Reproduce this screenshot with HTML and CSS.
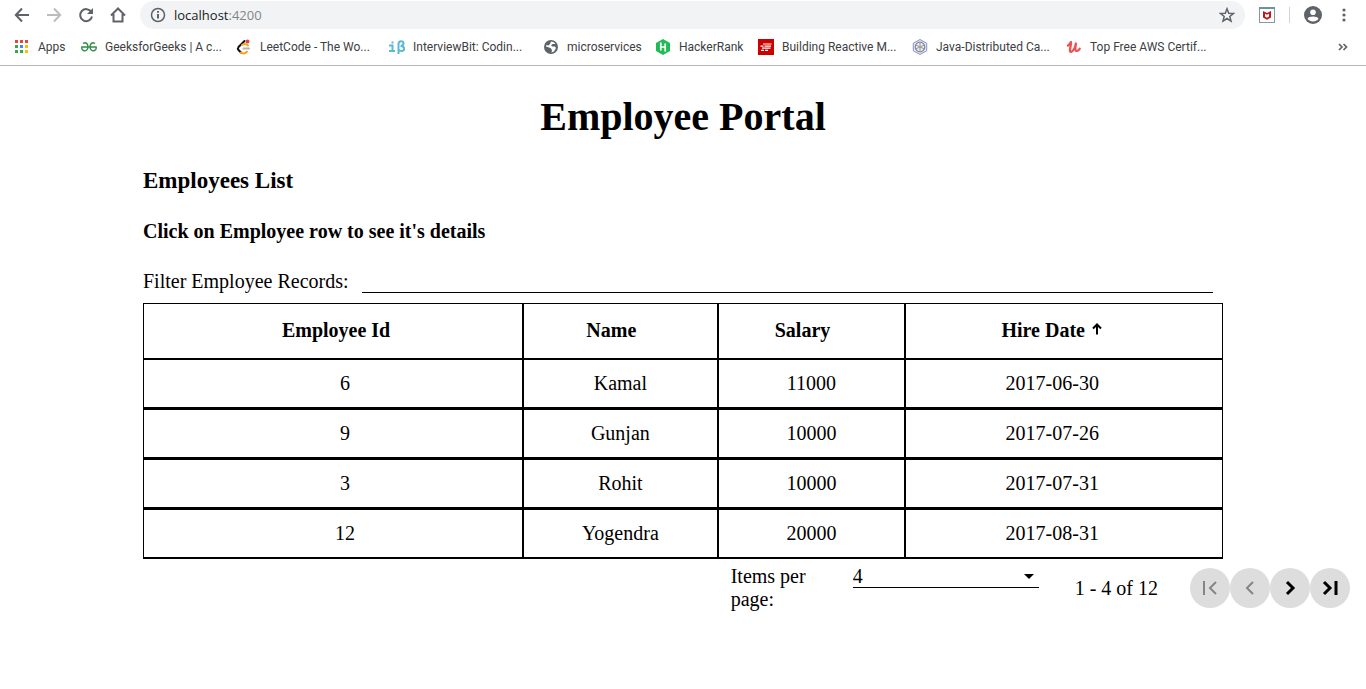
FILE: index.html
```html
<!DOCTYPE html>
<html lang="en">
<head>
<meta charset="utf-8">
<title>Employee Portal</title>
<link rel="stylesheet" href="styles.css">
</head>
<body>
<header class="browser">
  <div class="toolbar">
    <nav class="nav-buttons" aria-label="Navigation">
      <button class="icon-button" aria-label="Back"><svg class="icon" viewBox="0 0 16 16"><path d="M15 8H2M8 1.500L1.800 8L8 14.500" /></svg></button>
      <button class="icon-button is-muted" aria-label="Forward"><svg class="icon" viewBox="0 0 16 16"><path d="M1 8h13M8 1.500L14.200 8L8 14.500" /></svg></button>
      <button class="icon-button" aria-label="Reload"><svg class="icon" viewBox="0 0 16 16"><path d="M13.300 5A6 6 0 1 0 14 9.500" /><path class="solid" d="M15 1v6H9z" /></svg></button>
      <button class="icon-button" aria-label="Home"><svg class="icon" viewBox="0 0 16 16"><path d="M1 8.500L8 1.500l7 7M3.500 7v7.500h9V7" /></svg></button>
    </nav>
    <div class="address">
      <svg class="icon thin" viewBox="0 0 16 16"><circle cx="8" cy="8" r="6.500" /><path d="M8 7v4.500M8 4v1.800" stroke-width="2" /></svg>
      <span class="url">localhost<span class="port">:4200</span></span>
      <button class="icon-button" aria-label="Bookmark this page"><svg class="icon thin" viewBox="0 0 16 16"><path d="M8 1.800l1.700 4.400 4.700.3-3.600 3 1.200 4.600L8 11.500l-4 2.600 1.200-4.600-3.600-3 4.700-.3z" /></svg></button>
    </div>
    <div class="extensions">
      <button class="icon-button" aria-label="Security extension"><svg class="glyph" viewBox="0 0 16 16"><path fill="#8b979f" d="M0 0h16v16H0z"/><path fill="#6893a5" d="M0 0h16v2H0z"/><path fill="#fff" d="M1 2h14v13H1z"/><path fill="#c01818" d="M4 4l4 2 4-2v6.500L8 12.800 4 10.500z"/><path fill="#fff" d="M6 6.700l2 1 2-1v2.800l-2 1.200-2-1.200z"/></svg></button>
      <span class="divider"></span>
      <button class="icon-button" aria-label="Profile"><svg class="glyph profile" viewBox="0 0 18 18"><circle cx="9" cy="9" r="9" fill="#5f6368"/><circle cx="9" cy="6.200" r="2.800" fill="#fff"/><path fill="#fff" d="M3.500 12.800C4.500 9.800 13.500 9.800 14.500 12.800 12 16.500 6 16.500 3.500 12.800z"/></svg></button>
      <button class="icon-button" aria-label="Menu"><svg class="glyph" viewBox="0 0 16 16" fill="#5f6368"><circle cx="8" cy="3" r="1.600"/><circle cx="8" cy="8" r="1.600"/><circle cx="8" cy="13" r="1.600"/></svg></button>
    </div>
  </div>
  <nav class="bookmarks" aria-label="Bookmarks">
    <a class="bookmark" href="#"><svg class="glyph" viewBox="0 0 16 16"><path fill="#ea4335" d="M1 1h3v3H1zM6 1h3v3H6zM11 1h3v3h-3z"/><path fill="#34a853" d="M1 6h3v3H1zM1 11h3v3H1zM6 11h3v3H6z"/><path fill="#4285f4" d="M6 6h3v3H6z"/><path fill="#fbbc05" d="M11 6h3v3h-3zM11 11h3v3h-3z"/></svg>Apps</a>
    <a class="bookmark" href="#"><svg class="glyph" viewBox="0 0 16 16" fill="none" stroke="#2f8d46" stroke-width="1.400"><path d="M2 4.500C5 2.500 7 5 7 8s-2.500 4.500-4.500 3.500C.8 10.800.7 9 .9 8H15.100c.2 1 .1 2.800-1.600 3.500C11.500 12.500 9 11 9 8s2-5.500 5-3.500"/></svg>GeeksforGeeks | A c...</a>
    <a class="bookmark" href="#"><svg class="glyph" viewBox="0 0 16 16" fill="none" stroke-width="2" stroke-linecap="round"><path stroke="#111" d="M8.500 2L2.500 8c-.8 1-.8 2 0 3l2.500 2.500"/><path stroke="#ffa116" d="M5 13.500c2 1.500 4 1.500 6-.8M6 6c2-1.500 4-1.500 6 .5"/><path stroke="#b3b3b3" d="M7.500 9.500H13"/><circle cx="11.500" cy="2.500" r="2" fill="#df4444"/></svg>LeetCode - The Wo...</a>
    <a class="bookmark" href="#"><svg class="glyph" viewBox="0 0 16 16" fill="none" stroke="#5bbad0" stroke-width="2"><path d="M0 6.500h3.500V12M0 12h6M3.500 2.500v2M9.500 15V5c0-4 5.500-3.500 5-.5-.3 2-2 2.500-3 2.500 4.500 0 5 5 1 5-1.500 0-3-1-3-2"/></svg>InterviewBit: Codin...</a>
    <a class="bookmark" href="#"><svg class="glyph" viewBox="0 0 16 16"><circle cx="8" cy="8" r="7" fill="#5f6368"/><path fill="#fff" d="M8 2.500c2 0 3.500 1 4.500 2.500H9.500L8 6.500l1.500 1H12l1 1.500-2 3.500-2.500 1 .5-2.500L7.500 9 3 7.500 3.500 6l2 .5L7 5z"/></svg>microservices</a>
    <a class="bookmark" href="#"><svg class="glyph" viewBox="0 0 16 16"><path fill="#1ebc54" d="M8 0l7 4v8l-7 4-7-4V4z"/><path fill="none" stroke="#fff" stroke-width="1.700" d="M5.800 3.500v8M10.200 4.500v8M5.800 8h4.400"/></svg>HackerRank</a>
    <a class="bookmark" href="#"><svg class="glyph" viewBox="0 0 16 16"><path fill="#c00" d="M0 0h16v16H0z"/><path stroke="#fff" stroke-width="1.200" d="M5 5h8.500M2.500 7.100h3M6.500 7.100h6.500M4 9.200h8.500M3 11.300h3M7 11.300h3"/></svg>Building Reactive M...</a>
    <a class="bookmark" href="#"><svg class="glyph" viewBox="0 0 16 16" fill="none"><path fill="#e8ebf5" stroke="#8492c8" d="M8 .5l6.700 3.700v7.600L8 15.500l-6.700-3.700V4.200z"/><circle cx="8" cy="8" r="4.800" stroke="#888" stroke-width="1.200"/><path stroke="#999" d="M8 3v10M3.500 6l9 4M3.500 10l9-4"/></svg>Java-Distributed Ca...</a>
    <a class="bookmark" href="#"><svg class="glyph" viewBox="0 0 16 16" fill="none" stroke="#ec5252" stroke-width="2.300" stroke-linecap="round" stroke-linejoin="round"><path d="M2 6.500c1.500-1 2.500-3 3-3.500.5 3-2 8-.8 9.500C6.500 14 9 9 10 4.500c-.5 3-1.300 6.500 0 7.300 1.200.5 3-1 3.700-2"/></svg>Top Free AWS Certif...</a>
    <button class="icon-button more" aria-label="More bookmarks"><svg class="glyph" viewBox="0 0 16 16" fill="none" stroke="#5f6368" stroke-width="1.700"><path d="M4 5l3 3-3 3M8.500 5l3 3-3 3"/></svg></button>
  </nav>
</header>
<main class="page">
  <h1 class="title">Employee Portal</h1>
  <section class="content">
    <h2 class="heading">Employees List</h2>
    <h3 class="hint">Click on Employee row to see it's details</h3>
    <div class="filter">
      <label for="filter">Filter Employee Records:</label>
      <input class="filter-input" id="filter" type="text">
    </div>
    <table class="employees">
      <colgroup><col class="col-id"><col class="col-name"><col class="col-salary"><col class="col-date"></colgroup>
      <thead>
        <tr>
          <th><button class="sort">Employee Id<span class="arrow"></span></button></th>
          <th><button class="sort">Name<span class="arrow"></span></button></th>
          <th><button class="sort">Salary<span class="arrow"></span></button></th>
          <th aria-sort="ascending"><button class="sort">Hire Date<span class="arrow"><svg viewBox="0 0 12 12"><path d="M6 11.500V2M2 5.500l4-4 4 4"/></svg></span></button></th>
        </tr>
      </thead>
      <tbody>
        <tr><td>6</td><td>Kamal</td><td>11000</td><td>2017-06-30</td></tr>
        <tr><td>9</td><td>Gunjan</td><td>10000</td><td>2017-07-26</td></tr>
        <tr><td>3</td><td>Rohit</td><td>10000</td><td>2017-07-31</td></tr>
        <tr><td>12</td><td>Yogendra</td><td>20000</td><td>2017-08-31</td></tr>
      </tbody>
    </table>
  </section>
  <div class="paginator">
    <label class="size-label" for="size">Items per page:</label>
    <div class="size-field">
      <select class="size" id="size"><option>4</option><option>8</option><option>12</option></select>
      <svg class="caret" viewBox="0 0 10 5"><path d="M0 0h10L5 5z"/></svg>
    </div>
    <span class="range">1 - 4 of 12</span>
    <div class="pager">
      <button class="page-button" disabled aria-label="First page"><svg viewBox="0 0 24 24"><path d="M6 5v14M18 6l-6 6 6 6"/></svg></button>
      <button class="page-button" disabled aria-label="Previous page"><svg viewBox="0 0 24 24"><path d="M15 6l-6 6 6 6"/></svg></button>
      <button class="page-button" aria-label="Next page"><svg viewBox="0 0 24 24"><path d="M9 6l6 6-6 6"/></svg></button>
      <button class="page-button" aria-label="Last page"><svg viewBox="0 0 24 24"><path d="M6 6l6 6-6 6M18 5v14"/></svg></button>
    </div>
  </div>
</main>
</body>
</html>
```
FILE: styles.css
```css
* { box-sizing: border-box; }
body {
  margin: 0;
  background: #fff;
  color: #000;
  font: 20px/23px "Liberation Serif", serif;
}
button, input, select {
  font: inherit;
  color: inherit;
  border: 0;
  background: none;
  padding: 0;
  border-radius: 0;
}
svg { display: block; flex: none; }

.browser {
  border-bottom: 1px solid #b6b6b6;
  color: #3c4043;
  font: 12px/16px Roboto, sans-serif;
}
.toolbar {
  display: flex;
  align-items: center;
  height: 30px;
  padding: 0 14px;
}
.nav-buttons { display: flex; gap: 16px; }
.icon-button { display: flex; align-items: center; }
.icon, .glyph { width: 16px; height: 16px; }
.icon {
  fill: none;
  stroke: #5f6368;
  stroke-width: 2;
}
.icon .solid { fill: #5f6368; stroke: none; }
.thin { stroke-width: 1.5; }
.is-muted .icon { stroke: #babcbe; }
.profile { width: 18px; height: 18px; }
.address {
  display: flex;
  align-items: center;
  flex: 1;
  height: 28px;
  margin-left: 14px;
  padding: 0 10px;
  gap: 8px;
  border-radius: 14px;
  background: #f1f3f4;
}
.url {
  flex: 1;
  color: #202124;
  font-family: "Open Sans", sans-serif;
  font-size: 13px;
}
.port { color: #80868b; }
.extensions {
  display: flex;
  align-items: center;
  gap: 14px;
  margin-left: 14px;
}
.divider { width: 1px; height: 16px; background: #d0d2d4; }
.bookmarks {
  display: grid;
  grid-template-columns: 67px 155px 153px 154px 112px 103px 154px 154px 1fr auto;
  align-items: center;
  height: 35px;
  padding: 0 15px 2px 14px;
}
.bookmark {
  display: flex;
  align-items: center;
  gap: 8px;
  color: inherit;
  text-decoration: none;
  white-space: nowrap;
}

.page { padding: 28px 16px 0; }
.title {
  margin: 0 0 28px;
  font-size: 40px;
  line-height: 46px;
  text-align: center;
}
.content { max-width: 1080px; margin: 0 auto; }
.heading { margin: 0 0 26px; font-size: 23px; line-height: 26px; }
.hint { margin: 0 0 26px; font-size: 20px; line-height: 23px; }
.filter {
  display: flex;
  align-items: center;
  gap: 13px;
  padding-right: 10px;
}
.filter-input {
  flex: 1;
  height: 24px;
  border-bottom: 1px solid #000;
}
.employees {
  width: 100%;
  margin-top: 10px;
  border-spacing: 0;
  table-layout: fixed;
  text-align: center;
}
.col-id { width: 35.2%; }
.col-name { width: 18%; }
.col-salary { width: 17.4%; }
th, td { padding: 0; border: 1px solid #000; }
th { height: 56px; padding-bottom: 2px; }
td { height: 50px; border-bottom-width: 2px; }
th:first-child, td:first-child { padding-left: 24px; }
th:last-child, td:last-child { padding-right: 24px; }
.sort {
  display: inline-flex;
  align-items: center;
  font-weight: bold;
}
.arrow { width: 12px; height: 14px; margin-left: 6px; }
.arrow svg {
  width: 12px;
  height: 12px;
  fill: none;
  stroke: #000;
  stroke-width: 2;
}
.paginator {
  display: flex;
  align-items: center;
  justify-content: flex-end;
  padding-top: 6px;
}
.size-label { width: 84px; margin-right: 38px; }
.size-field {
  display: flex;
  align-items: center;
  align-self: flex-start;
  width: 186px;
  height: 23px;
  padding-right: 5px;
  border-bottom: 1px solid #000;
}
.size { flex: 1; height: 22px; appearance: none; }
.caret { width: 10px; height: 5px; }
.range { margin: 0 32px 0 36px; }
.pager { display: flex; }
.page-button {
  display: flex;
  align-items: center;
  justify-content: center;
  width: 40px;
  height: 40px;
  border-radius: 50%;
  background: #ddd;
}
.page-button svg {
  width: 24px;
  height: 24px;
  fill: none;
  stroke: #000;
  stroke-width: 3;
}
.page-button:disabled svg { stroke: #858585; stroke-width: 2; }
```
